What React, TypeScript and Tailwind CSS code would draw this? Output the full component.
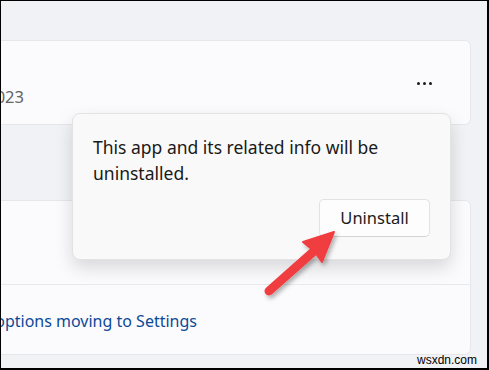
import React from 'react';

const ui = { fontFamily: '"Noto Sans", "Open Sans", sans-serif' };

export default function App() {
  return (
    <div
      className="relative w-[489px] h-[370px] overflow-hidden bg-[#f1f2f6] border-black border-l border-t border-r-2 border-b-2"
      style={ui}
    >
      {/* App card */}
      <div className="mt-[39px] mr-[16px] h-[85px] -ml-px flex items-start justify-between bg-[#fbfbfd] border border-l-0 border-[#e6e7eb] rounded-r-md">
        <div className="w-[24px] mt-[44px] flex justify-end whitespace-nowrap text-[16.5px] leading-[24px] text-[#646464]">
          Installed 1/12/2023
        </div>
        <button className="mt-[31px] mr-[36px] flex gap-[3px] items-center h-[22px] px-[2px]">
          <span className="w-[3px] h-[3px] rounded-full bg-[#1b1b1b]" />
          <span className="w-[3px] h-[3px] rounded-full bg-[#1b1b1b]" />
          <span className="w-[3px] h-[3px] rounded-full bg-[#1b1b1b]" />
        </button>
      </div>

      {/* Related settings card */}
      <div className="mt-[75px] mr-[16px] -ml-px h-[155px] flex flex-col bg-[#fbfbfd] border border-l-0 border-[#e6e7eb] rounded-r-md">
        <div className="h-[84px] border-b border-[#e8e9ec]" />
        <div className="flex-1 flex items-start">
          <div className="w-[197px] mt-[24px] flex justify-end whitespace-nowrap text-[16px] leading-[24px] text-[#0c4a98]">
            Uninstall options moving to Settings
          </div>
        </div>
      </div>

      {/* Flyout */}
      <div className="absolute left-[71px] top-[112px] w-[379px] h-[147px] flex flex-col rounded-lg bg-[#f9f9f9] border border-[#e3e3e3] shadow-[0_8px_18px_rgba(0,0,0,0.14)]">
        <p className="pl-[20px] pr-[16px] pt-[20px] text-[17.5px] leading-[26px] text-[#1a1a1a]">
          This app and its related info will be uninstalled.
        </p>
        <div className="flex justify-end pr-[20px] mt-[13px]">
          <button className="w-[111px] h-[38px] rounded-[5px] bg-[#fdfdfd] border border-[#e2e2e2] border-b-[#d4d4d4] text-[16.5px] text-[#1b1b1b]">
            Uninstall
          </button>
        </div>
      </div>

      {/* Pointer arrow */}
      <svg className="absolute left-0 top-0 pointer-events-none" width="489" height="370">
        <defs>
          <filter id="sh" x="-50%" y="-50%" width="200%" height="200%">
            <feDropShadow dx="2" dy="3" stdDeviation="2" floodColor="#000" floodOpacity="0.3" />
          </filter>
        </defs>
        <g filter="url(#sh)" fill="#f03c40" stroke="#f03c40">
          <line x1="268" y1="290" x2="312" y2="251" strokeWidth="9" strokeLinecap="round" />
          <path d="M333 231 L302 241 L313 250 L321 261 Z" strokeWidth="2" strokeLinejoin="round" />
        </g>
      </svg>

      {/* Watermark */}
      <div
        className="absolute right-[10px] bottom-[1px] text-[12px] leading-[14px] text-black"
        style={{ fontFamily: '"Liberation Sans", Arial, sans-serif' }}
      >
        wsxdn.com
      </div>
    </div>
  );
}
